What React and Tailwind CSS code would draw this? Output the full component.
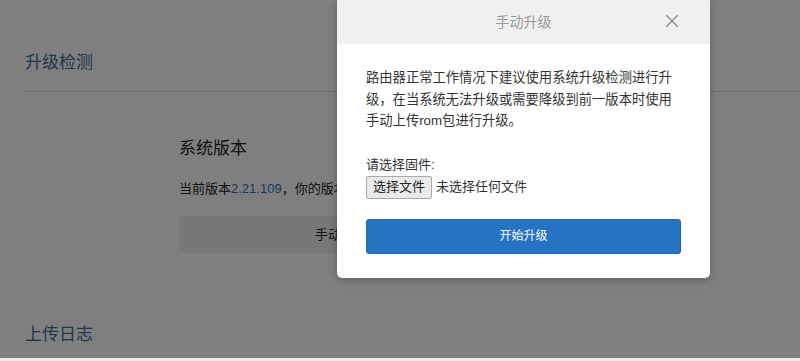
import { X } from 'lucide-react'

const font = { fontFamily: '"Liberation Sans", "Noto Sans CJK SC", sans-serif' }

function Page() {
  return (
    <div className="bg-white h-[358px] overflow-hidden">
      <div className="pl-[25px] pt-[52px]">
        <h2 className="text-[17px] leading-[22px] text-[#4a6c9c]">升级检测</h2>
        <div className="mt-[17px] h-px bg-[#dcdcdc]" />
      </div>
      <div className="pl-[179px] pt-[46px]">
        <h3 className="text-[17px] leading-[22px] text-[#222]">系统版本</h3>
        <p className="mt-[20px] text-[13px] leading-[18px] text-[#222]">
          当前版本<span className="text-[#3c6fb0]">2.21.109</span>，你的版本已是最新版本
        </p>
        <button className="mt-[18px] w-[324px] h-[37px] rounded-[3px] bg-[#f0f0f0] text-[13px] text-[#222]">
          手动升级
        </button>
      </div>
      <div className="pl-[25px] pt-[71px]">
        <h2 className="text-[17px] leading-[22px] text-[#4a6c9c]">上传日志</h2>
      </div>
    </div>
  )
}

function Modal() {
  return (
    <div className="absolute left-[337px] top-0 w-[373px] bg-white rounded-b-[5px] shadow-[0_2px_8px_rgba(0,0,0,0.25)]">
      <div className="relative h-[44px] bg-[#f0f0f0] flex items-center justify-center">
        <span className="text-[14px] text-[#9a9a9a]">手动升级</span>
        <X className="absolute left-[661px] -translate-x-[337px] top-[10px] w-[22px] h-[22px] text-[#8a8a8a]" strokeWidth={1.3} />
      </div>
      <div className="px-[29px] pt-[23px] pb-[24px]">
        <p className="text-[13.3px] leading-[21.5px] text-[#333]">
          路由器正常工作情况下建议使用系统升级检测进行升级，在当系统无法升级或需要降级到前一版本时使用手动上传rom包进行升级。
        </p>
        <p className="mt-[24px] text-[13px] leading-[18px] text-[#333]">请选择固件:</p>
        <div className="mt-[2px] flex items-center gap-[4px]">
          <button className="h-[23px] px-[6px] border border-[#a9a9a9] rounded-[2px] bg-[#eaeaea] text-[13px] text-[#222]">
            选择文件
          </button>
          <span className="text-[13px] text-[#333]">未选择任何文件</span>
        </div>
        <button className="mt-[20px] w-full h-[35px] rounded-[3px] bg-[#2673c3] border border-[#2266b0] text-white text-[12px]">
          开始升级
        </button>
      </div>
    </div>
  )
}

export default function App() {
  return (
    <div className="relative w-[800px] h-[361px] overflow-hidden bg-[#ececec]" style={font}>
      <Page />
      <div className="absolute left-0 top-0 w-full h-[358px] bg-black/50" />
      <Modal />
    </div>
  )
}
